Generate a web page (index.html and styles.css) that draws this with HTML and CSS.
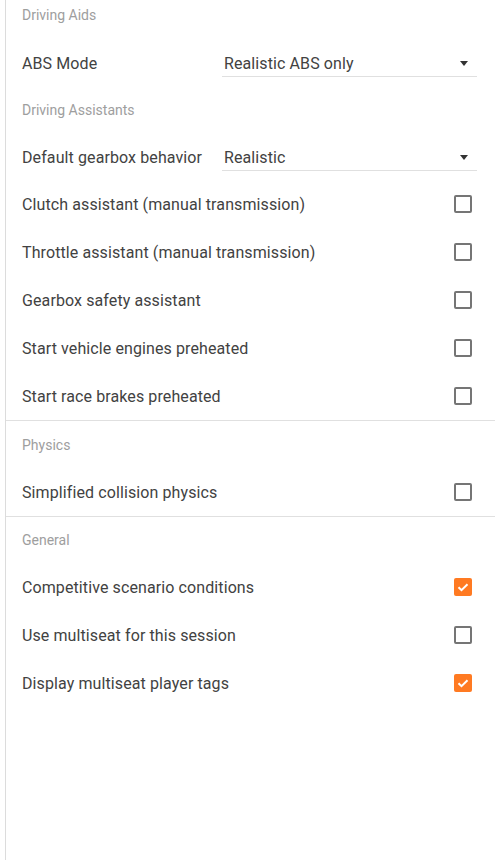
FILE: index.html
```html
<!DOCTYPE html>
<html>
<head>
<meta charset="utf-8">
<link rel="stylesheet" href="styles.css">
</head>
<body>
<div class="panel">
  <div class="header first">Driving Aids</div>
  <div class="row select-row">
    <div class="label">ABS Mode</div>
    <div class="select"><span>Realistic ABS only</span><i class="caret"></i></div>
  </div>
  <div class="header">Driving Assistants</div>
  <div class="row select-row">
    <div class="label">Default gearbox behavior</div>
    <div class="select"><span>Realistic</span><i class="caret"></i></div>
  </div>
  <div class="row"><div class="label">Clutch assistant (manual transmission)</div><span class="cb"></span></div>
  <div class="row"><div class="label">Throttle assistant (manual transmission)</div><span class="cb"></span></div>
  <div class="row"><div class="label">Gearbox safety assistant</div><span class="cb"></span></div>
  <div class="row"><div class="label">Start vehicle engines preheated</div><span class="cb"></span></div>
  <div class="row"><div class="label">Start race brakes preheated</div><span class="cb"></span></div>
  <div class="divider"></div>
  <div class="header">Physics</div>
  <div class="row"><div class="label">Simplified collision physics</div><span class="cb"></span></div>
  <div class="divider"></div>
  <div class="header tight">General</div>
  <div class="row"><div class="label">Competitive scenario conditions</div><span class="cb checked"><svg viewBox="0 0 18 18" width="18" height="18"><path d="M4.5 9.2l3 3 6-6" fill="none" stroke="#fff" stroke-width="2"/></svg></span></div>
  <div class="row"><div class="label">Use multiseat for this session</div><span class="cb"></span></div>
  <div class="row"><div class="label">Display multiseat player tags</div><span class="cb checked"><svg viewBox="0 0 18 18" width="18" height="18"><path d="M4.5 9.2l3 3 6-6" fill="none" stroke="#fff" stroke-width="2"/></svg></span></div>
</div>
</body>
</html>
```
FILE: styles.css
```css
html, body {
  margin: 0;
  padding: 0;
  background: #fff;
}
body {
  font-family: Roboto, "Liberation Sans", sans-serif;
}
.panel {
  margin-left: 5px;
  border-left: 1px solid #dcdcdc;
  min-height: 860px;
  box-sizing: border-box;
}
.header {
  height: 48px;
  display: flex;
  align-items: center;
  padding-left: 16px;
  font-size: 14px;
  color: #9e9e9e;
}
.header.first {
  height: 40px;
  box-sizing: border-box;
  align-items: flex-start;
  padding-top: 6px;
  line-height: 18px;
}
.divider + .header {
  height: 47px;
}
.divider + .header.tight {
  height: 46px;
}
.row {
  height: 48px;
  display: flex;
  align-items: center;
  padding-left: 16px;
  padding-right: 18px;
  font-size: 16px;
  letter-spacing: 0.1px;
  color: #424242;
}
.select-row {
  height: 46px;
}
.label {
  flex: 1;
}
.select-row .label {
  flex: 0 0 200px;
}
.select {
  flex: 1;
  height: 26px;
  margin-top: 2px;
  box-sizing: border-box;
  border-bottom: 1px solid #e0e0e0;
  display: flex;
  align-items: center;
  justify-content: space-between;
  padding-left: 2px;
  padding-right: 9px;
}
.caret {
  width: 0;
  height: 0;
  border-left: 4px solid transparent;
  border-right: 4px solid transparent;
  border-top: 5px solid #333;
}
.cb {
  width: 18px;
  height: 18px;
  box-sizing: border-box;
  border: 2px solid #757575;
  border-radius: 2px;
  margin-right: 5px;
  display: flex;
  flex: none;
}
.cb.checked {
  border: none;
  background: #ff7a22;
}
.divider {
  height: 1px;
  background: #e0e0e0;
}
```
